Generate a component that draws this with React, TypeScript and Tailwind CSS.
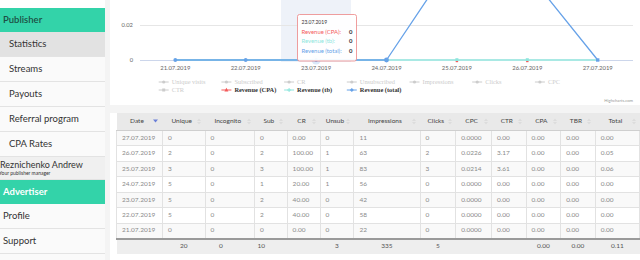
import React from "react";

const GREEN = "#33d3a9";

const rows = [
  ["27.07.2019", "0", "0", "0", "0.00", "0", "11", "0", "0.0000", "0.00", "0.00", "0.00", "0.00"],
  ["26.07.2019", "2", "0", "2", "100.00", "1", "63", "2", "0.0226", "3.17", "0.00", "0.00", "0.05"],
  ["25.07.2019", "3", "0", "3", "100.00", "1", "83", "3", "0.0214", "3.61", "0.00", "0.00", "0.06"],
  ["24.07.2019", "5", "0", "1", "20.00", "1", "56", "0", "0.0000", "0.00", "0.00", "0.00", "0.00"],
  ["23.07.2019", "5", "0", "2", "40.00", "0", "42", "0", "0.0000", "0.00", "0.00", "0.00", "0.00"],
  ["22.07.2019", "5", "0", "2", "40.00", "0", "58", "0", "0.0000", "0.00", "0.00", "0.00", "0.00"],
  ["21.07.2019", "0", "0", "0", "0.00", "0", "22", "0", "0.0000", "0.00", "0.00", "0.00", "0.00"],
];

const heads = ["Date", "Unique", "Incognito", "Sub", "CR", "Unsub", "Impressions", "Clicks", "CPC", "CTR", "CPA", "TBR", "Total"];
const colW = ["w-[46px]", "w-[43px]", "w-[50px]", "w-[33px]", "w-[33px]", "w-[34px]", "w-[67px]", "w-[36px]", "w-[36px]", "w-[35px]", "w-[35px]", "w-[35px]", "w-[45px]"];
const foot = ["", "20", "0", "10", "", "3", "335", "5", "", "", "0.00", "0.00", "0.11"];

const dates = ["21.07.2019", "22.07.2019", "23.07.2019", "24.07.2019", "25.07.2019", "26.07.2019", "27.07.2019"];
const px = (i: number) => 175.3 + i * 70.4;
const totals = [0, 0, 0, 0, 0.06, 0.05, 0];
const py = (v: number) => 60 - v * 1750;

function SideItem({ label, sub, active }: { label?: string; sub?: boolean; active?: boolean }) {
  return (
    <div
      className={
        "flex h-[25px] items-center border-b border-[#e3e3e3] text-[9.5px] text-[#333] " +
        (sub ? "pl-[9px] " : "pl-[3px] ") +
        (active ? "bg-[#e2e2e2]" : "bg-[#fafafa]")
      }
    >
      {label}
    </div>
  );
}

function SortIcon({ active }: { active?: boolean }) {
  if (active)
    return (
      <svg width="5" height="4" viewBox="0 0 5 4" className="shrink-0">
        <path d="M0 0.5 L5 0.5 L2.5 3.5 Z" fill="#6a7fd8" />
      </svg>
    );
  return (
    <svg width="4" height="7" viewBox="0 0 4 7" className="shrink-0">
      <path d="M0 3 L4 3 L2 0.5 Z" fill="#dcdcdc" />
      <path d="M0 4 L4 4 L2 6.5 Z" fill="#dcdcdc" />
    </svg>
  );
}

function Chart() {
  const row1 = ["Unique visits", "Subscribed", "CR", "Unsubscribed", "Impressions", "Clicks", "CPC"];
  const lx = (i: number) => 171.7 + i * 62.7;
  const totalPath = totals.map((v, i) => `${i ? "L" : "M"}${px(i)} ${py(v)}`).join(" ");
  return (
    <svg width="530" height="105" viewBox="110 0 530 105" className="block">
      <rect x="281" y="0" width="70" height="62" fill="#eef2f9" />
      <line x1="140" y1="25.5" x2="633" y2="25.5" stroke="#e6e6e6" strokeWidth="1" />
      <line x1="140" y1="60.5" x2="633" y2="60.5" stroke="#ccd6eb" strokeWidth="1" />
      <text x="133" y="27" textAnchor="end" fontSize="5.8" fill="#666" fontFamily="Lato, sans-serif">0.02</text>
      <text x="133" y="62" textAnchor="end" fontSize="5.8" fill="#666" fontFamily="Lato, sans-serif">0</text>
      {dates.map((d, i) => (
        <text key={d} x={px(i)} y="69.5" textAnchor="middle" fontSize="5.9" fill="#666" fontFamily="Lato, sans-serif">
          {d}
        </text>
      ))}
      <line x1={px(0)} y1="60" x2={px(6)} y2="60" stroke="#f45b5b" strokeWidth="1" />
      <line x1={px(0)} y1="60" x2={px(6)} y2="60" stroke="#a9e9e4" strokeWidth="2.2" />
      <path d={totalPath} fill="none" stroke="#67a2e8" strokeWidth="1.3" strokeLinejoin="round" />
      <rect x={px(4) - 1.5} y="58.2" width="3" height="3" fill="#8ee6dd" />
      <rect x={px(5) - 1.5} y="58.2" width="3" height="3" fill="#8ee6dd" />
      <rect x={px(4) - 1.2} y="61" width="2.4" height="1.2" fill="#f45b5b" />
      <rect x={px(5) - 1.2} y="61" width="2.4" height="1.2" fill="#f45b5b" />
      <circle cx={px(0)} cy="60" r="1.9" fill="#67a2e8" />
      <circle cx={px(1)} cy="60" r="1.9" fill="#67a2e8" />
      <circle cx={px(2)} cy="60" r="4.5" fill="#67a2e8" fillOpacity="0.25" />
      <circle cx={px(2)} cy="60" r="2.2" fill="#67a2e8" stroke="#fff" strokeWidth="0.5" />
      <circle cx={px(3)} cy="60" r="2.4" fill="#67a2e8" />
      <rect x={px(6) - 1.7} y="58.3" width="3.4" height="3.4" fill="#67a2e8" />

      <rect x="297.5" y="14.5" width="59" height="46.5" rx="2" fill="#fff" fillOpacity="0.93" stroke="#ec8585" strokeWidth="0.8" />
      <g fontFamily="Lato, sans-serif" fontSize="5.9">
        <text x="301.5" y="24" fill="#333" fontSize="5">23.07.2019</text>
        <text x="301.5" y="33.5" fill="#f45b5b">Revenue (CPA):</text>
        <text x="349" y="33.5" fill="#333" fontWeight="bold">0</text>
        <text x="301.5" y="43" fill="#8ee6dd">Revenue (tb):</text>
        <text x="349" y="43" fill="#333" fontWeight="bold">0</text>
        <text x="301.5" y="52.5" fill="#67a2e8">Revenue (total):</text>
        <text x="349" y="52.5" fill="#333" fontWeight="bold">0</text>
      </g>

      <g fontFamily="'Liberation Serif', serif" fontSize="6.4">
        {row1.map((t, i) => (
          <g key={t}>
            <line x1={lx(i) - 13} y1="82" x2={lx(i) - 3} y2="82" stroke="#ccc" strokeWidth="1" />
            <circle cx={lx(i) - 8} cy="82" r="1.6" fill="#ccc" />
            <text x={lx(i)} y="84.2" fill="#ccc">{t}</text>
          </g>
        ))}
        <line x1={lx(0) - 13} y1="90" x2={lx(0) - 3} y2="90" stroke="#ccc" strokeWidth="1" />
        <rect x={lx(0) - 9.5} y="88.5" width="3" height="3" fill="#ccc" />
        <text x={lx(0)} y="92.2" fill="#ccc">CTR</text>

        <line x1={lx(1) - 13} y1="90" x2={lx(1) - 3} y2="90" stroke="#f45b5b" strokeWidth="1" />
        <path d={`M${lx(1) - 8} 87.8 L${lx(1) - 6} 91.5 L${lx(1) - 10} 91.5 Z`} fill="#f45b5b" />
        <text x={lx(1)} y="92.2" fill="#333" fontWeight="bold">Revenue (CPA)</text>

        <line x1={lx(2) - 13} y1="90" x2={lx(2) - 3} y2="90" stroke="#8ee6dd" strokeWidth="1" />
        <path d={`M${lx(2) - 8} 88 L${lx(2) - 8} 92 M${lx(2) - 10} 90 L${lx(2) - 6} 90`} stroke="#8ee6dd" strokeWidth="1" />
        <text x={lx(2)} y="92.2" fill="#333" fontWeight="bold">Revenue (tb)</text>

        <line x1={lx(3) - 13} y1="90" x2={lx(3) - 3} y2="90" stroke="#67a2e8" strokeWidth="1" />
        <path d={`M${lx(3) - 8} 88 L${lx(3) - 6} 90 L${lx(3) - 8} 92 L${lx(3) - 10} 90 Z`} fill="#67a2e8" />
        <text x={lx(3)} y="92.2" fill="#333" fontWeight="bold">Revenue (total)</text>
      </g>
      <text x="633" y="102" textAnchor="end" fontSize="4.2" fill="#999" fontFamily="Lato, sans-serif">
        Highcharts.com
      </text>
    </svg>
  );
}

export default function App() {
  return (
    <div className="flex h-[260px] w-[640px] overflow-hidden bg-[#f4f4f4] font-['Lato',sans-serif]">
      <aside className="w-[105px] shrink-0 bg-[#fafafa]">
        <div className="h-[8px] bg-white" />
        <div className="flex h-[24px] items-center pl-[3px] text-[9.5px] font-semibold text-[#1d4f44]" style={{ backgroundColor: GREEN }}>
          Publisher
        </div>
        <SideItem label="Statistics" sub active />
        <SideItem label="Streams" sub />
        <SideItem label="Payouts" sub />
        <SideItem label="Referral program" sub />
        <SideItem label="CPA Rates" sub />
        <div className="flex h-[23px] flex-col justify-center overflow-hidden border-b border-[#e3e3e3] bg-[#f0f0f0] text-[#333]">
          <div className="text-[9px] leading-[10px]">Reznichenko Andrew</div>
          <div className="-ml-[1px] text-[5px] leading-[6px]">Your publisher manager</div>
        </div>
        <div className="flex h-[24px] items-center pl-[3px] text-[9.5px] font-bold text-white" style={{ backgroundColor: GREEN }}>
          Advertiser
        </div>
        <SideItem label="Profile" />
        <SideItem label="Support" />
        <SideItem />
      </aside>

      <main className="ml-[5px] flex min-w-0 flex-1 flex-col gap-[8px]">
        <div className="h-[105px] shrink-0 bg-white">
          <Chart />
        </div>
        <div className="flex-1 overflow-hidden bg-white pl-[6px]">
          <table className="table-fixed border-collapse text-[6.5px] leading-none">
            <colgroup>
              {colW.map((w, i) => (
                <col key={i} className={w} />
              ))}
            </colgroup>
            <thead>
              <tr className="h-[17px] bg-[#e9e9e9] text-[#444]">
                {heads.map((h, i) => (
                  <th key={h} className="border-b border-[#cfcfcf] px-[4px] font-normal">
                    <div className="flex items-center justify-between">
                      <span className="flex-1 text-center">{h}</span>
                      <SortIcon active={i === 0} />
                    </div>
                  </th>
                ))}
              </tr>
            </thead>
            <tbody>
              {rows.map((r, ri) => (
                <tr key={ri} className={"h-[15.5px] " + (ri % 2 === 0 ? "bg-[#f9f9f9]" : "bg-white")}>
                  {r.map((c, ci) => (
                    <td key={ci} className="border border-[#e2e2e2] px-[5px] text-left text-[#8a8a8a]">
                      {c}
                    </td>
                  ))}
                </tr>
              ))}
            </tbody>
            <tfoot>
              <tr className="h-[15px] border-t-2 border-[#9a9a9a] bg-[#eeeeee] text-[#555]">
                {foot.map((f, i) => (
                  <td
                    key={i}
                    className={
                      "px-[4px] " + (i === 2 ? "pl-[14px] text-left" : i === 3 ? "pl-[3px] text-left" : "text-center")
                    }
                  >
                    {f}
                  </td>
                ))}
              </tr>
            </tfoot>
          </table>
        </div>
      </main>
    </div>
  );
}
